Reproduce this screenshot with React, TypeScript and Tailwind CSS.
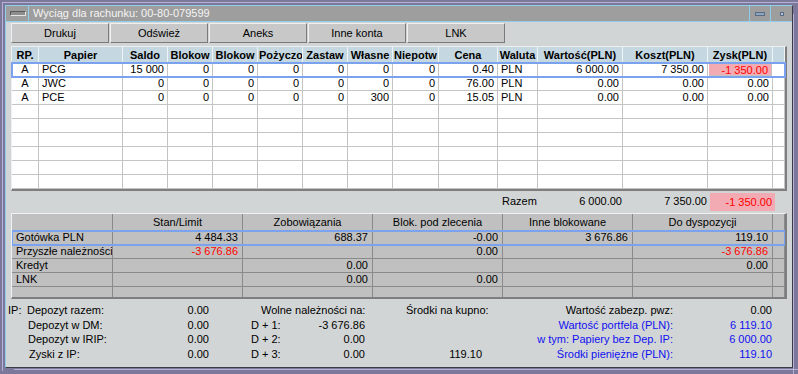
import React from 'react';

const topCols =
  'grid grid-cols-[27px_84px_45px_45px_45px_45px_45px_45px_46px_59px_40px_85px_85px_65px_12px]';
const lowCols = 'grid grid-cols-[101px_130px_130px_130px_130px_140px_12px]';

const topHead = [
  'RP.',
  'Papier',
  'Saldo',
  'Blokow',
  'Blokow',
  'Pożyczo',
  'Zastaw',
  'Własne',
  'Niepotw',
  'Cena',
  'Waluta',
  'Wartość(PLN)',
  'Koszt(PLN)',
  'Zysk(PLN)',
  '',
];

type Row = string[];

const papers: Row[] = [
  ['A', 'PCG', '15 000', '0', '0', '0', '0', '0', '0', '0.40', 'PLN', '6 000.00', '7 350.00', '-1 350.00', ''],
  ['A', 'JWC', '0', '0', '0', '0', '0', '0', '0', '76.00', 'PLN', '0.00', '0.00', '0.00', ''],
  ['A', 'PCE', '0', '0', '0', '0', '0', '300', '0', '15.05', 'PLN', '0.00', '0.00', '0.00', ''],
];

const emptyTop: Row = Array(15).fill('');

const lowHead = ['', 'Stan/Limit', 'Zobowiązania', 'Blok. pod zlecenia', 'Inne blokowane', 'Do dyspozycji', ''];

const lowRows: { cells: Row; red?: number[] }[] = [
  { cells: ['Gotówka PLN', '4 484.33', '688.37', '-0.00', '3 676.86', '119.10', ''] },
  { cells: ['Przyszłe należności', '-3 676.86', '', '0.00', '', '-3 676.86', ''], red: [1, 5] },
  { cells: ['Kredyt', '', '0.00', '', '', '0.00', ''] },
  { cells: ['LNK', '', '0.00', '0.00', '', '', ''] },
  { cells: ['', '', '', '', '', '', ''] },
];

function TopRow({ cells, selected }: { cells: Row; selected?: boolean }) {
  return (
    <div
      className={`${topCols} h-[14px] bg-white ${
        selected ? 'relative z-10 outline-2 outline-[#7aa2ee] -outline-offset-1' : ''
      }`}
    >
      {cells.map((c, i) => {
        const left = i === 1 || i === 10;
        const center = i === 0;
        const pink = selected && i === 13;
        return (
          <div
            key={i}
            className={`border-r border-b border-[#c4c4c4] overflow-hidden whitespace-nowrap leading-[13px] ${
              center ? 'text-center' : left ? 'text-left pl-[3px]' : 'text-right pr-[3px]'
            } ${pink ? 'bg-[#f2aab3] text-[#ff0000] mx-[1px] my-[1px] leading-[11px]' : ''}`}
          >
            {c}
          </div>
        );
      })}
    </div>
  );
}

function Btn({ label }: { label: string }) {
  return (
    <div className="w-[98px] h-[20px] flex items-center justify-center bg-[#c8c8c8] border border-t-[#f0f0f0] border-l-[#f0f0f0] border-r-[#7a7a7a] border-b-[#7a7a7a]">
      {label}
    </div>
  );
}

function Bar({ children }: { children: React.ReactNode }) {
  return <div className="h-[14.5px] leading-[14.5px] flex whitespace-nowrap">{children}</div>;
}

export default function App() {
  return (
    <div className="relative w-[798px] h-[374px] overflow-hidden bg-[#7b789c] font-['Liberation_Sans',Arial,sans-serif] text-[11px] text-black">
      {/* windows behind */}
      <div className="absolute left-[2px] top-[2px] w-[800px] h-[369px] border-l border-t border-[#b7b3d6]" />
      <div className="absolute left-[14px] top-[369px] w-[800px] border-t border-[#b7b3d6]" />
      <div className="absolute left-[793px] top-[14px] h-[360px] border-l border-[#b7b3d6]" />

      <div className="relative ml-[5px] mt-[5px] w-[788px] h-[363px] flex flex-col bg-[#d2d5d5] border border-[#8fcdea] border-r-[#3c3c48] border-b-[#3c3c48]">
        {/* title bar */}
        <div className="h-[16px] flex items-stretch bg-[#9e9e9e] border-b border-[#8fcdea]">
          <div className="w-[22px] ml-[1px] border-r border-[#8fcdea] flex items-center justify-center">
            <div className="w-[16px] h-[5px] rounded-[1px] bg-[#8e8e8e] border border-t-[#5a5a5a] border-l-[#5a5a5a] border-r-[#e4e4e4] border-b-[#e4e4e4]" />
          </div>
          <div className="flex-1 pl-[4px] text-[#f4f4f4] leading-[15px]">Wyciąg dla rachunku: 00-80-079599</div>
          <div className="w-[21px] border-l border-[#8fcdea] flex items-center justify-center">
            <div className="w-[10px] h-[4px] bg-[#8aa6c0] border border-[#5a6a80]" />
          </div>
          <div className="w-[22px] border-l border-[#8fcdea] flex items-center justify-center">
            <div className="w-[4px] h-[4px] bg-[#a8c4dc] border border-[#5a6a80]" />
          </div>
        </div>

        {/* buttons */}
        <div className="flex gap-[1px] ml-[5px] mt-[1px] h-[20px]">
          {['Drukuj', 'Odśwież', 'Aneks', 'Inne konta', 'LNK'].map((b) => (
            <Btn key={b} label={b} />
          ))}
        </div>

        {/* top grid */}
        <div className="ml-[5px] mt-[3px] w-[776px] border-l border-t border-[#eef0f0] border-r-2 border-b-2 border-r-[#7e7e7e] border-b-[#7e7e7e]">
          <div className={`${topCols} h-[16px] bg-[#c5d7e1] font-bold`}>
            {topHead.map((h, i) => (
              <div
                key={i}
                className="border-r border-[#eef3f6] text-center px-[1px] overflow-hidden whitespace-nowrap leading-[16px]"
              >
                {h}
              </div>
            ))}
          </div>
          {papers.map((r, i) => (
            <TopRow key={i} cells={r} selected={i === 0} />
          ))}
          {Array.from({ length: 6 }).map((_, i) => (
            <TopRow key={'e' + i} cells={emptyTop} />
          ))}
        </div>

        {/* totals */}
        <div className="ml-[5px] mt-[1px] h-[19px] flex items-center">
          <div className="w-[491px]" />
          <div className="w-[40px]">Razem</div>
          <div className="w-[80px] text-right">6 000.00</div>
          <div className="w-[85px] text-right">7 350.00</div>
          <div className="ml-[3px] w-[65px] h-[18px] bg-[#f2aab3] text-[#ff0000] text-right pr-[3px] leading-[18px]">
            -1 350.00
          </div>
        </div>

        {/* lower grid */}
        <div className="ml-[5px] mt-[2px] w-[776px] h-[86px] overflow-hidden bg-[#c0c0c0] border-l border-t border-[#f0f2f2] border-r-2 border-b-2 border-r-[#7e7e7e] border-b-[#7e7e7e]">
          <div className={`${lowCols} h-[17px]`}>
            {lowHead.map((h, i) => (
              <div key={i} className="border-r border-[#8a8a8a] text-center overflow-hidden whitespace-nowrap leading-[16px] px-[2px]">
                {h}
              </div>
            ))}
          </div>
          {lowRows.map((r, ri) => (
            <div
              key={ri}
              className={`${lowCols} h-[14px] ${ri === 0 ? 'relative z-10 outline-2 outline-[#7aa2ee] -outline-offset-1' : ''}`}
            >
              {r.cells.map((c, i) => (
                <div
                  key={i}
                  className={`border-r border-b border-[#8a8a8a] overflow-hidden whitespace-nowrap leading-[13px] ${
                    i === 0 ? 'text-left pl-[4px]' : 'text-right pr-[4px]'
                  } ${r.red?.includes(i) ? 'text-[#ff0000]' : ''}`}
                >
                  {c}
                </div>
              ))}
            </div>
          ))}
        </div>

        {/* bottom summary */}
        <div className="flex mt-[4px]">
          <div className="ml-[2px] w-[201px] flex flex-col">
            <Bar>
              <span className="w-[19px]">IP:</span>
              <span className="flex-1">Depozyt razem:</span>
              <span>0.00</span>
            </Bar>
            <Bar>
              <span className="w-[20px]" />
              <span className="flex-1">Depozyt w DM:</span>
              <span>0.00</span>
            </Bar>
            <Bar>
              <span className="w-[20px]" />
              <span className="flex-1">Depozyt w IRIP:</span>
              <span>0.00</span>
            </Bar>
            <Bar>
              <span className="w-[21px]" />
              <span className="flex-1">Zyski z IP:</span>
              <span>0.00</span>
            </Bar>
          </div>

          <div className="ml-[42px] w-[114px] flex flex-col">
            <Bar>
              <span className="pl-[10px]">Wolne należności na:</span>
            </Bar>
            {[
              ['D + 1:', '-3 676.86'],
              ['D + 2:', '0.00'],
              ['D + 3:', '0.00'],
            ].map(([l, v]) => (
              <Bar key={l}>
                <span className="flex-1">{l}</span>
                <span>{v}</span>
              </Bar>
            ))}
          </div>

          <div className="ml-[41px] w-[76px] flex flex-col">
            <Bar>
              <span>Środki na kupno:</span>
            </Bar>
            <Bar>
              <span />
            </Bar>
            <Bar>
              <span />
            </Bar>
            <Bar>
              <span className="flex-1 text-right">119.10</span>
            </Bar>
          </div>

          <div className="flex flex-col">
            {[
              ['Wartość zabezp. pwz:', '0.00', false],
              ['Wartość portfela (PLN):', '6 119.10', true],
              ['w tym: Papiery bez Dep. IP:', '6 000.00', true],
              ['Środki pieniężne (PLN):', '119.10', true],
            ].map(([l, v, blue]) => (
              <Bar key={l as string}>
                <span className={`w-[191px] text-right ${blue ? 'text-[#1010f0]' : ''}`}>{l}</span>
                <span className={`w-[99px] text-right ${blue ? 'text-[#1010f0]' : ''}`}>{v}</span>
              </Bar>
            ))}
          </div>
        </div>
      </div>
    </div>
  );
}
